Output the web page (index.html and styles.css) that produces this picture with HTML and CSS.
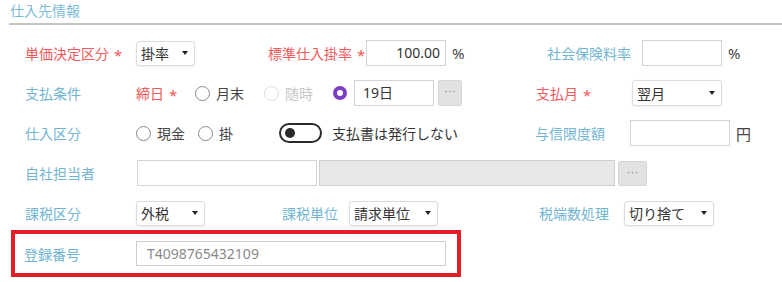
FILE: index.html
```html
<!DOCTYPE html>
<html lang="ja">
<head>
<meta charset="utf-8">
<title>仕入先情報</title>
<link rel="stylesheet" href="styles.css">
</head>
<body>
<div class="panel">
  <div class="legend">仕入先情報</div>

  <div class="row">
    <span class="lab req w111">単価決定区分<i>*</i></span>
    <div class="sel w59"><span>掛率</span><b class="caret"></b></div>
    <span class="lab req ml73 w98">標準仕入掛率<i>*</i></span>
    <div class="inp w80 num">100.00</div>
    <span class="unit">%</span>
    <span class="lab w170 right">社会保険料率</span>
    <div class="inp w80"></div>
    <span class="unit">%</span>
  </div>

  <div class="row">
    <span class="lab w111">支払条件</span>
    <span class="lab req w59">締日<i>*</i></span>
    <span class="radio"><b class="dot"></b>月末</span>
    <span class="radio ml20 disabled"><b class="dot"></b>随時</span>
    <span class="radio ml20"><b class="dot on"></b></span>
    <div class="inp w80 txt">19日</div>
    <div class="btn ml4 w24">···</div>
    <span class="lab req ml74 w96">支払月<i>*</i></span>
    <div class="sel w90 h26"><span>翌月</span><b class="caret"></b></div>
  </div>

  <div class="row">
    <span class="lab w111">仕入区分</span>
    <span class="radio"><b class="dot"></b>現金</span>
    <span class="radio ml13"><b class="dot"></b>掛</span>
    <span class="toggle ml46"><b class="knob"></b></span>
    <span class="plain ml10">支払書は発行しない</span>
    <span class="lab ml77 w95">与信限度額</span>
    <div class="inp w100"></div>
    <span class="unit">円</span>
  </div>

  <div class="row">
    <span class="lab w112">自社担当者</span>
    <div class="inp w180"></div>
    <div class="inp gray ml2 w296"></div>
    <div class="btn ml3 w29 h25">···</div>
  </div>

  <div class="row">
    <span class="lab w111">課税区分</span>
    <div class="sel w69"><span>外税</span><b class="caret"></b></div>
    <span class="lab ml77 w67">課税単位</span>
    <div class="sel w89"><span>請求単位</span><b class="caret"></b></div>
    <span class="lab ml101 w85">税端数処理</span>
    <div class="sel w90"><span>切り捨て</span><b class="caret"></b></div>
  </div>

  <div class="row hl">
    <span class="lab w112">登録番号</span>
    <div class="inp w310 h25 ph">T4098765432109</div>
  </div>
</div>
</body>
</html>
```
FILE: styles.css
```css
* { box-sizing: border-box; }
html, body { margin: 0; padding: 0; background: #fff; }
body {
  font-family: "Noto Sans", "Noto Sans CJK JP", sans-serif;
  font-size: 14px;
  color: #333;
}
.panel { width: 782px; height: 282px; overflow: hidden; padding-top: 1px; }
.legend {
  margin-left: 9px;
  padding-left: 1px;
  height: 24px;
  line-height: 20px;
  color: #7cbcd8;
  border-bottom: 2px solid #c4c4c4;
  margin-bottom: 8px;
}
.row {
  display: flex;
  align-items: center;
  height: 40px;
  padding-left: 25px;
  white-space: nowrap;
}
.lab { color: #72b5d3; flex: none; }
.lab.req { color: #f25b5b; }
.lab i {
  font-style: normal;
  margin-left: 5px;
  font-size: 15px;
  position: relative;
  top: 2px;
}
.right { text-align: right; padding-right: 11px; }
.plain { color: #333; }
.unit { margin-left: 6px; width: 20px; flex: none; color: #444; font-size: 15px; }

.sel {
  flex: none;
  display: flex;
  align-items: center;
  justify-content: space-between;
  height: 25px;
  padding: 0 6px 0 4px;
  border: 1px solid #dcdcdc;
  border-radius: 3px;
  box-shadow: 0 1px 2px rgba(0,0,0,0.08);
  color: #333;
}
.caret {
  width: 0; height: 0;
  border-left: 3.5px solid transparent;
  border-right: 3.5px solid transparent;
  border-top: 4px solid #222;
}
.inp {
  flex: none;
  height: 26px;
  border: 1px solid #d4d4d4;
  background: #fff;
  line-height: 24px;
  color: #333;
}
.inp.num { text-align: right; padding-right: 5px; }
.inp.txt { padding-left: 8px; }
.inp.gray { background: #e8e8e8; border-color: #cfcfcf; }
.inp.ph { color: #8a8a8a; padding-left: 10px; border-color: #cfcfcf; }
.btn {
  flex: none;
  height: 26px;
  background: #e2e2e2;
  border: 1px solid #d6d6d6;
  border-radius: 2px;
  color: #8a8a8a;
  font-size: 11px;
  text-align: center;
  line-height: 20px;
  letter-spacing: 1px;
  padding-left: 1px;
}
.radio { display: inline-flex; align-items: center; flex: none; color: #444; }
.radio.disabled { color: #c8c8c8; }
.dot {
  width: 15px; height: 15px;
  border: 1px solid #8a8a8a;
  border-radius: 50%;
  margin-right: 6px;
  background: #fff;
}
.disabled .dot { border-color: #dedede; }
.dot.on { border: 4px solid #7b3fc6; width: 14px; height: 14px; margin-right: 7px; }
.toggle {
  flex: none;
  position: relative;
  width: 43px; height: 20px;
  border: 2px solid #2b2b2b;
  border-radius: 10px;
}
.knob {
  position: absolute;
  left: 4px; top: 3px;
  width: 10px; height: 10px;
  border-radius: 50%;
  background: #2b2b2b;
}
.hl {
  margin-top: -3px;
  margin-left: 11px;
  width: 450px;
  height: 47px;
  border: 4px solid #e41e26;
  padding-left: 9px;
}

.w24 { width: 24px; } .w29 { width: 29px; } .w59 { width: 59px; }
.w67 { width: 67px; } .w69 { width: 69px; } .w80 { width: 80px; }
.w85 { width: 85px; } .w89 { width: 89px; } .w90 { width: 90px; }
.w95 { width: 95px; } .w96 { width: 96px; } .w98 { width: 98px; }
.w100 { width: 100px; } .w111 { width: 111px; } .w112 { width: 112px; }
.w170 { width: 170px; } .w180 { width: 180px; } .w296 { width: 296px; }
.w310 { width: 310px; }
.h25 { height: 25px; } .h26 { height: 26px; }
.ml2 { margin-left: 2px; } .ml3 { margin-left: 3px; } .ml4 { margin-left: 4px; }
.ml10 { margin-left: 10px; } .ml13 { margin-left: 13px; } .ml20 { margin-left: 20px; }
.ml46 { margin-left: 46px; } .ml73 { margin-left: 73px; } .ml74 { margin-left: 74px; }
.ml77 { margin-left: 77px; } .ml101 { margin-left: 101px; }
```
